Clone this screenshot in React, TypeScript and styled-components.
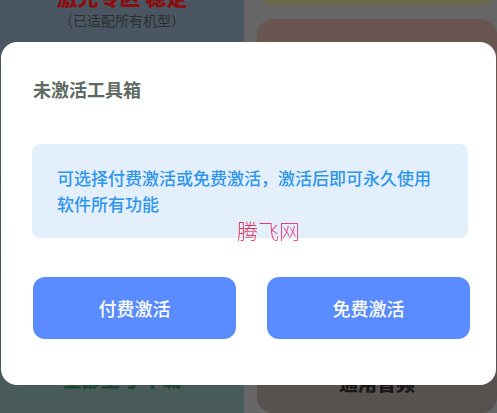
import styled, { createGlobalStyle } from "styled-components";

const GlobalStyle = createGlobalStyle`
  html, body {
    margin: 0;
    padding: 0;
    width: 497px;
    height: 413px;
    overflow: hidden;
    background: #666666;
    font-family: "Noto Sans CJK SC", "Noto Sans", sans-serif;
  }
`;

export const Page = styled.div`
  width: 497px;
  height: 413px;
  display: grid;
  grid-template-columns: 244px 240px;
  column-gap: 13px;
  background: #666666;
  position: relative;
  overflow: hidden;
`;

export const LeftColumn = styled.div`
  height: 413px;
  background: linear-gradient(#4a5762 0px, #4a5762 180px, #485a5a 300px);
  display: flex;
  flex-direction: column;
  align-items: center;
`;

export const PromoTitle = styled.div`
  margin-top: -16px;
  font-size: 21px;
  font-weight: 900;
  line-height: 24px;
  color: #8a0d10;
`;

export const PromoSub = styled.div`
  margin-top: 3px;
  font-size: 14px;
  line-height: 18px;
  color: #2a2f33;
`;

export const BottomText = styled.div<{ $color: string; $bottom: number }>`
  margin-top: auto;
  margin-bottom: ${(p) => p.$bottom}px;
  font-size: 19px;
  font-weight: 900;
  line-height: 24px;
  color: ${(p) => p.$color};
`;

export const RightColumn = styled.div`
  height: 413px;
  display: flex;
  flex-direction: column;
  gap: 13px;
`;

export const Card = styled.div<{ $bg: string; $h: number; $top?: number }>`
  height: ${(p) => p.$h}px;
  margin-top: ${(p) => p.$top ?? 0}px;
  border-radius: 16px;
  background: ${(p) => p.$bg};
  display: flex;
  flex-direction: column;
  align-items: center;
`;

export const Dialog = styled.div`
  position: absolute;
  left: 1px;
  top: 42px;
  width: 495px;
  height: 343px;
  box-sizing: border-box;
  padding: 35px 28px 0 31px;
  background: #ffffff;
  border-radius: 16px;
  display: flex;
  flex-direction: column;
`;

export const DialogTitle = styled.div`
  font-size: 18px;
  font-weight: 700;
  line-height: 24px;
  color: #5e6a63;
  padding-left: 1px;
`;

export const InfoBox = styled.div`
  margin-top: 43px;
  height: 94px;
  box-sizing: border-box;
  padding: 21px 31px 0 25px;
  background: #e3f0fc;
  border-radius: 8px;
  font-size: 17px;
  font-weight: 500;
  line-height: 26px;
  color: #2f95ee;
`;

export const ButtonRow = styled.div`
  margin-top: 39px;
  display: grid;
  grid-template-columns: 203px 203px;
  column-gap: 31px;
  padding-left: 1px;
`;

export const ActionButton = styled.button`
  height: 62px;
  border: none;
  border-radius: 12px;
  background: #5a8bff;
  color: #ffffff;
  font-family: "Noto Sans CJK SC", "Noto Sans", sans-serif;
  font-size: 18px;
  font-weight: 500;
  cursor: pointer;
`;

export const Watermark = styled.div`
  position: absolute;
  left: 237px;
  top: 216px;
  font-size: 21px;
  font-weight: 300;
  line-height: 28px;
  color: #e8304f;
  background: linear-gradient(90deg, #e8304f, #e64b8c);
  -webkit-background-clip: text;
  background-clip: text;
  -webkit-text-fill-color: transparent;
`;

function App() {
  return (
    <>
      <GlobalStyle />
      <Page>
        <LeftColumn>
          <PromoTitle>激光专区 稳定</PromoTitle>
          <PromoSub>（已适配所有机型）</PromoSub>
          <BottomText $color="#1a4632" $bottom={22}>
            全部型号 下载
          </BottomText>
        </LeftColumn>
        <RightColumn>
          <Card $bg="#6b6a4f" $h={40} $top={-32} />
          <Card $bg="linear-gradient(#6a5650 0px, #6a5650 200px, #575250 340px)" $h={420}>
            <BottomText $color="#1a1616" $bottom={0} style={{ marginTop: 352 }}>
              通用音频
            </BottomText>
          </Card>
        </RightColumn>
        <Dialog>
          <DialogTitle>未激活工具箱</DialogTitle>
          <InfoBox>可选择付费激活或免费激活，激活后即可永久使用软件所有功能</InfoBox>
          <ButtonRow>
            <ActionButton>付费激活</ActionButton>
            <ActionButton>免费激活</ActionButton>
          </ButtonRow>
        </Dialog>
        <Watermark>腾飞网</Watermark>
      </Page>
    </>
  );
}

export default App;
